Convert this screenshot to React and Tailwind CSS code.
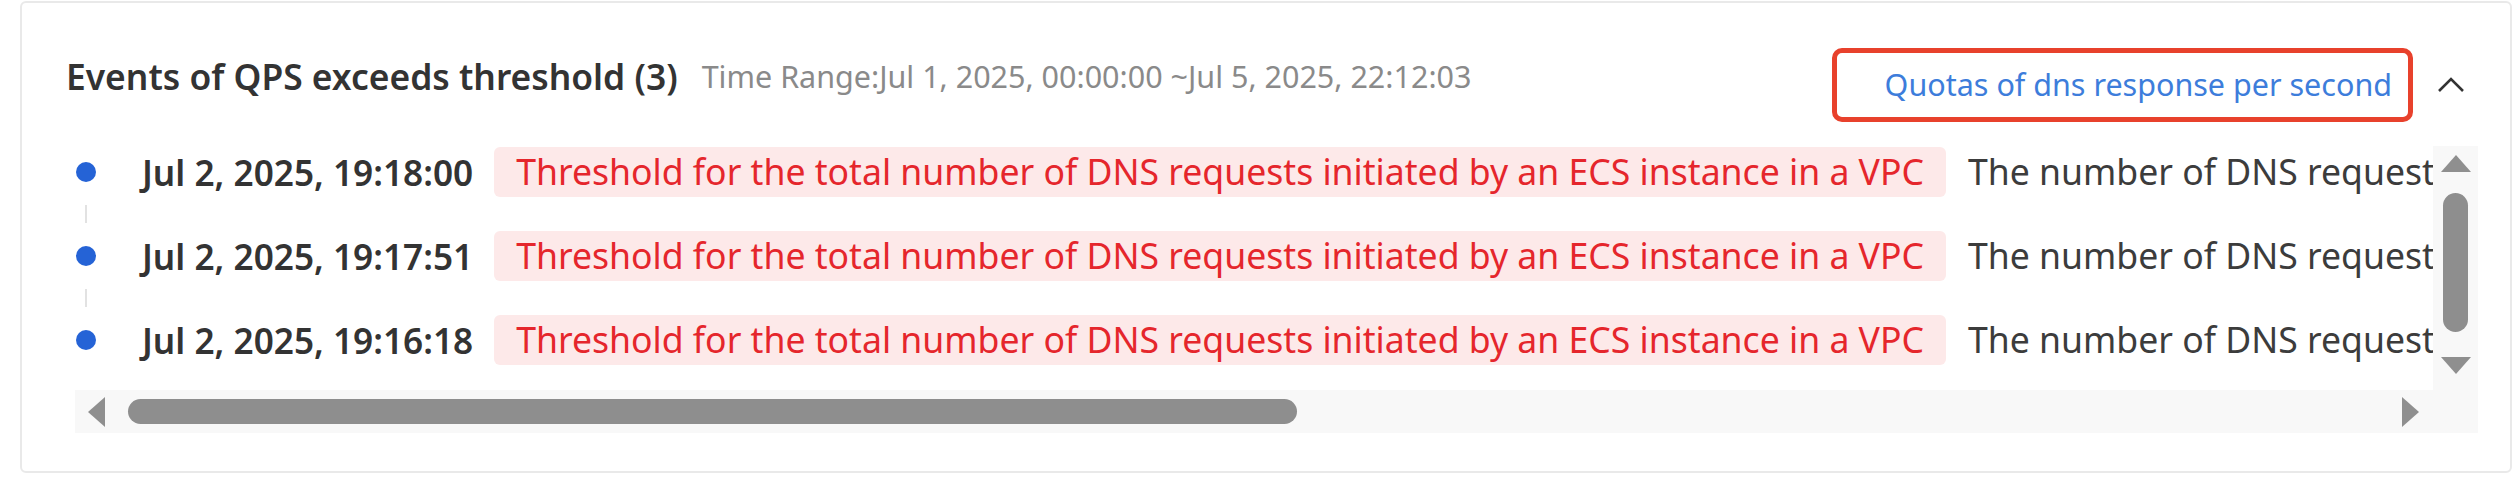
import React from 'react';

const events = [
  { time: 'Jul 2, 2025, 19:18:00' },
  { time: 'Jul 2, 2025, 19:17:51' },
  { time: 'Jul 2, 2025, 19:16:18' },
];

const RULE = 'Threshold for the total number of DNS requests initiated by an ECS instance in a VPC';
const DESC = 'The number of DNS requests initiated by the ECS instance in the VPC exceeds the threshold';

const Arrow = ({ dir }) => {
  const pts = {
    up: '0,17 15,0 30,17',
    down: '0,0 30,0 15,17',
    left: '17,0 17,30 0,15',
    right: '0,0 17,15 0,30',
  }[dir];
  const vertical = dir === 'up' || dir === 'down';
  return (
    <svg width={vertical ? 30 : 17} height={vertical ? 17 : 30} viewBox={vertical ? '0 0 30 17' : '0 0 17 30'}>
      <polygon points={pts} fill="#8f8f8f" />
    </svg>
  );
};

const EventRow = ({ event, last }) => (
  <div>
    <div className="flex h-[50px] items-center whitespace-nowrap">
      <span className="ml-[1px] h-[20px] w-[20px] shrink-0 rounded-full bg-[#2563d6]" />
      <span className="ml-[46px] text-[35.2px] font-semibold text-[#333]">{event.time}</span>
      <span className="ml-[21px] flex h-[50px] items-center rounded-[6px] bg-[#fde9e9] px-[22px] text-[35.6px] text-[#e5262c]">
        {RULE}
      </span>
      <span className="ml-[22px] text-[35.6px] text-[#3c3c3c]">{DESC}</span>
    </div>
    {!last && (
      <div className="h-[34px] py-[8px]">
        <div className="ml-[10px] h-[18px] w-[2px] bg-[#e2e2e2]" />
      </div>
    )}
  </div>
);

export default function App() {
  return (
    <div className="min-h-screen bg-white font-['Noto_Sans','Open_Sans',sans-serif]">
      <div className="ml-[20px] mt-px w-[2492px] rounded-[6px] border-2 border-[#e9e9e9] bg-white">
        {/* header */}
        <div className="flex items-start justify-between pl-[44px] pr-[45px] pt-[45px]">
          <div className="mt-[8px] flex items-center whitespace-nowrap leading-[40px]">
            <span className="text-[35.4px] font-semibold text-[#333]">Events of QPS exceeds threshold (3)</span>
            <span className="ml-[24px] text-[30.5px] text-[#8a8a8a]">
              Time Range:Jul 1, 2025, 00:00:00 ~Jul 5, 2025, 22:12:03
            </span>
          </div>
          <div className="flex items-center">
            <div className="flex h-[74px] w-[581px] items-center justify-end rounded-[10px] border-[5px] border-[#e8412c] pr-[16px]">
              <a href="#" className="whitespace-nowrap text-[30.5px] text-[#3d7ddb]">
                Quotas of dns response per second
              </a>
            </div>
            <svg className="ml-[24px]" width="28" height="16" viewBox="0 0 28 16">
              <polyline points="2,14 14,2 26,14" fill="none" stroke="#333" strokeWidth="2.6" />
            </svg>
          </div>
        </div>

        {/* event list with scrollbars */}
        <div className="mt-[24px] pb-[38px] pl-[53px] pr-[32px]">
          <div className="flex">
            <div className="h-[244px] w-[2358px] overflow-hidden pt-px">
              {events.map((e, i) => (
                <EventRow key={e.time} event={e} last={i === events.length - 1} />
              ))}
            </div>
            <div className="flex h-[244px] w-[45px] flex-col items-center bg-[#f8f8f8] pt-[9px]">
              <Arrow dir="up" />
              <div className="mt-[21px] h-[139px] w-[25px] rounded-full bg-[#8e8e8e]" />
              <div className="mt-[25px]">
                <Arrow dir="down" />
              </div>
            </div>
          </div>
          <div className="flex">
            <div className="flex h-[43px] w-[2358px] items-center bg-[#f8f8f8] pl-[13px]">
              <Arrow dir="left" />
              <div className="ml-[23px] h-[25px] w-[1169px] rounded-full bg-[#8e8e8e]" />
              <div className="ml-auto mr-[14px]">
                <Arrow dir="right" />
              </div>
            </div>
            <div className="h-[43px] w-[45px] bg-[#f8f8f8]" />
          </div>
        </div>
      </div>
    </div>
  );
}
